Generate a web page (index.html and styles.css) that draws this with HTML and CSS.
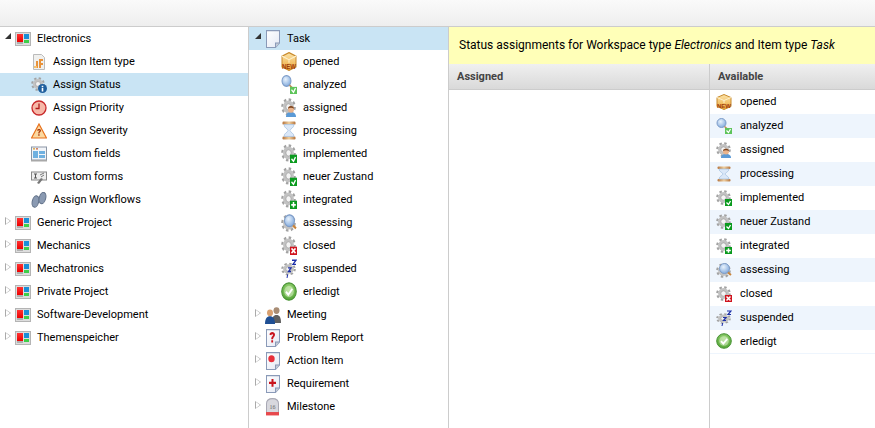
FILE: index.html
```html
<!DOCTYPE html>
<html lang="en">

<head>
    <meta charset="UTF-8">
    <meta name="viewport" content="width=device-width, initial-scale=1.0">
    <title>Workspace types</title>
    <link rel="stylesheet" href="styles.css">
</head>

<body>
    <svg class="defs" xmlns="http://www.w3.org/2000/svg">
        <defs>
            <linearGradient id="red" x1="0" y1="0" x2="0" y2="1"><stop offset="0" stop-color="#f33"/><stop offset="1" stop-color="#e00"/></linearGradient>
            <linearGradient id="sand" x1="0" y1="0" x2="1" y2="0"><stop offset="0" stop-color="#b5743c"/><stop offset=".5" stop-color="#f0d0a0"/><stop offset="1" stop-color="#b5743c"/></linearGradient>
            <linearGradient id="box" x1="0" y1="0" x2="0" y2="1"><stop offset="0" stop-color="#fbe3a8"/><stop offset="1" stop-color="#eda93c"/></linearGradient>
            <radialGradient id="lens" cx=".4" cy=".35" r=".7"><stop offset="0" stop-color="#e8f2fc"/><stop offset="1" stop-color="#7fa8dc"/></radialGradient>
            <radialGradient id="okball" cx=".5" cy=".35" r=".7"><stop offset="0" stop-color="#a5dc80"/><stop offset="1" stop-color="#4a9e2e"/></radialGradient>
            <linearGradient id="paper" x1="0" y1="0" x2="1" y2="1"><stop offset="0" stop-color="#fff"/><stop offset="1" stop-color="#e4e8f4"/></linearGradient>
        </defs>

        <symbol id="ws" viewBox="0 0 16 14" preserveAspectRatio="none">
            <rect x=".5" y=".5" width="15" height="13" fill="#ddd" stroke="#b4b4b4"/>
            <rect x="2" y="2" width="6" height="8" fill="url(#red)"/>
            <rect x="9" y="2" width="5" height="5" fill="#1b8fd8"/>
            <rect x="9" y="8" width="5" height="3" fill="#3ecf4a"/>
            <rect x="2" y="10" width="6" height="2" fill="#b0b0b0"/>
        </symbol>
        <symbol id="gear" viewBox="0 0 16 16" preserveAspectRatio="none">
            <circle cx="8" cy="8" r="6.600" fill="none" stroke="#a2a2a2" stroke-width="2.400" stroke-dasharray="2.600 2.580"/>
            <circle cx="8" cy="8" r="5.800" fill="#c2c2c2"/>
            <circle cx="8" cy="8" r="2.800" fill="#f4f4f4" stroke="#949494" stroke-width=".6"/>
        </symbol>
        <symbol id="page" viewBox="0 0 16 16" preserveAspectRatio="none">
            <path d="M1.500.5h13v11l-4 4h-9z" fill="url(#paper)" stroke="#8a9ab8"/>
            <path d="M10.500 15.500v-4h4" fill="#c4cad6" stroke="#8a9ab8"/>
        </symbol>

        <symbol id="i-itemtype" viewBox="0 0 16 16" preserveAspectRatio="none">
            <path d="M2.500.5h8l3 3v12h-11z" fill="#f0f0ee" stroke="#bbb"/>
            <path d="M5 7h2v7H5zM8 5h4v2H10v2h2v2h-2v3H8z" fill="#e8923a"/>
            <path d="M3 12h3v2H3z" fill="#f4c070"/>
        </symbol>
        <symbol id="i-status" viewBox="0 0 16 16" preserveAspectRatio="none">
            <use href="#gear" width="14" height="14"/>
            <circle cx="11.500" cy="11.500" r="4.500" fill="#1f5f9e"/>
            <path d="M10.700 8.800h1.600v1.400h-1.600zM10.700 11h1.600v3.400h-1.600z" fill="#fff"/>
        </symbol>
        <symbol id="i-priority" viewBox="0 0 16 16" preserveAspectRatio="none">
            <circle cx="8" cy="8" r="7" fill="#f6b8a8" stroke="#c8282a" stroke-width="1.300"/>
            <path d="M8 3.500V8.500H4.500" fill="none" stroke="#b01c1c" stroke-width="1.300"/>
        </symbol>
        <symbol id="i-severity" viewBox="0 0 16 16" preserveAspectRatio="none">
            <path d="M8 1 15.500 15H.5z" fill="#fbd8a0" stroke="#e8701a" stroke-width="1.200"/>
            <path d="M6 7.500C6 5.500 10 5.500 10 7.500 10 9 8.500 9 8.500 10.500H7.200C7.200 8.500 8.600 8.500 8.600 7.600 8.600 7 7.400 7 7.400 7.800zM7.200 11.300h1.400v1.500H7.200z" fill="#a83a10"/>
        </symbol>
        <symbol id="i-fields" viewBox="0 0 16 16" preserveAspectRatio="none">
            <rect x=".5" y="1" width="15" height="13" fill="#f2f4f8" stroke="#8b96a6"/>
            <rect x="2" y="2.200" width="2" height="1.300" fill="#d6a030"/>
            <rect x="5" y="2.200" width="2" height="1.300" fill="#c64"/>
            <rect x="2" y="5" width="5" height="7" fill="#6fb0e0"/>
            <rect x="8" y="5" width="6" height="3" fill="#6fb0e0"/>
            <rect x="8" y="9" width="6" height="3" fill="#6fb0e0"/>
            <rect x="0" y="14" width="16" height="1.500" fill="#a8a8a8"/>
        </symbol>
        <symbol id="i-forms" viewBox="0 0 16 16" preserveAspectRatio="none">
            <rect x=".5" y="3" width="15" height="8" fill="#eee" stroke="#888"/>
            <path d="M3 5h3M4.500 5v4M3 9h3" stroke="#555" fill="none"/>
            <path d="M9 6l4-2M10 8l3-2" stroke="#777" fill="none"/>
            <path d="M6 14l4-5 2 1-4 5z" fill="#777"/>
        </symbol>
        <symbol id="i-workflows" viewBox="0 0 16 16" preserveAspectRatio="none">
            <ellipse cx="4.500" cy="9.500" rx="3.200" ry="5.800" transform="rotate(15 4.500 9.500)" fill="#8a9ab2" stroke="#5f6f87"/>
            <ellipse cx="11.500" cy="6" rx="3.200" ry="5.800" transform="rotate(15 11.500 6)" fill="#8a9ab2" stroke="#5f6f87"/>
        </symbol>

        <symbol id="s-opened" viewBox="0 0 16 16" preserveAspectRatio="none">
            <path d="M8 .5 15 3.500v9L8 15.500 1 12.500v-9z" fill="url(#box)" stroke="#c88a2c"/>
            <path d="M1 3.500 8 6.500l7-3M8 6.500V9" fill="none" stroke="#fdf0cc"/>
        </symbol>
        <symbol id="s-analyzed" viewBox="0 0 16 16" preserveAspectRatio="none">
            <circle cx="5.500" cy="5" r="4.500" fill="url(#lens)" stroke="#7d9cc8"/>
            <path d="M8.500 8.500l3 2.500" stroke="#b98a50" stroke-width="1.500"/>
            <rect x="9" y="10" width="7" height="6" fill="#5ec45a"/>
            <path d="M10.500 12.500l2 2 2-3.500" fill="none" stroke="#fff" stroke-width="1.200"/>
        </symbol>
        <symbol id="s-assigned" viewBox="0 0 16 16" preserveAspectRatio="none">
            <use href="#gear" width="15" height="15"/>
            <path d="M5 16c0-3 2-4 5-4s5 1 5 4z" fill="#5b9ad6"/>
            <circle cx="10" cy="9.500" r="3" fill="#eab48c"/>
            <path d="M7 9c0-3 6-3 6 0-2-1-4-1-6 0z" fill="#7a4420"/>
        </symbol>
        <symbol id="s-processing" viewBox="0 0 16 16" preserveAspectRatio="none">
            <rect x="1.500" y=".5" width="13" height="2.500" rx="1" fill="url(#sand)"/>
            <rect x="1.500" y="13" width="13" height="2.500" rx="1" fill="url(#sand)"/>
            <path d="M3 3h10c0 3-4 3.500-4 5s4 2 4 5H3c0-3 4-3.500 4-5S3 6 3 3z" fill="#dbe8f8" stroke="#9ab8dc" stroke-width=".6"/>
        </symbol>
        <symbol id="s-implemented" viewBox="0 0 16 16" preserveAspectRatio="none">
            <use href="#gear" width="15" height="15"/>
            <rect x="9" y="9" width="7" height="7" fill="#0a9a1e"/>
            <path d="M10.500 12.500l2 2 2-3.500" fill="none" stroke="#fff" stroke-width="1.300"/>
        </symbol>
        <symbol id="s-integrated" viewBox="0 0 16 16" preserveAspectRatio="none">
            <use href="#gear" width="15" height="15"/>
            <rect x="9" y="9" width="7" height="7" fill="#0a9a1e"/>
            <path d="M12.500 10.200v4.600M10.200 12.500h4.600" fill="none" stroke="#fff" stroke-width="1.500"/>
        </symbol>
        <symbol id="s-assessing" viewBox="0 0 16 16" preserveAspectRatio="none">
            <use href="#gear" y="1" width="15" height="15"/>
            <circle cx="8.500" cy="6.500" r="5" fill="url(#lens)" stroke="#7d9cc8"/>
            <path d="M12 10.500l3 2.500" stroke="#c8843c" stroke-width="2"/>
        </symbol>
        <symbol id="s-closed" viewBox="0 0 16 16" preserveAspectRatio="none">
            <use href="#gear" width="15" height="15"/>
            <rect x="9" y="9" width="7" height="7" fill="#d0141e"/>
            <path d="M10.500 10.500l4 4M14.500 10.500l-4 4" fill="none" stroke="#fff" stroke-width="1.500"/>
        </symbol>
        <symbol id="s-suspended" viewBox="0 0 16 16" preserveAspectRatio="none">
            <use href="#gear" y="3" width="15" height="11"/>
            <path d="M11 1h4l-3 3.500h3M7 7.500h3l-2.500 3H10" fill="none" stroke="#1c2fa8" stroke-width="1.200"/>
            <path d="M6 16l.7-3" stroke="#1c2fa8"/>
        </symbol>
        <symbol id="s-erledigt" viewBox="0 0 16 16" preserveAspectRatio="none">
            <circle cx="8" cy="8" r="7.300" fill="url(#okball)" stroke="#4a9436"/>
            <circle cx="8" cy="8" r="4.800" fill="#d8efc8" opacity=".55"/>
            <path d="M5 8.200l2.300 2.400L11.300 5.800" fill="none" stroke="#fff" stroke-width="1.800"/>
        </symbol>

        <symbol id="t-task" viewBox="0 0 16 16" preserveAspectRatio="none"><use href="#page" width="16" height="16"/></symbol>
        <symbol id="t-meeting" viewBox="0 0 16 16" preserveAspectRatio="none">
            <circle cx="11.500" cy="4" r="3" fill="#a88c74"/>
            <path d="M7 15c0-5 1.500-7 4.500-7s4.500 2 4.500 7z" fill="#5f5f5f"/>
            <circle cx="5" cy="6" r="3" fill="#d8a070"/>
            <path d="M0 16c0-5 2-7 5-7s5 2 5 7z" fill="#1f4f94"/>
        </symbol>
        <symbol id="t-problem" viewBox="0 0 16 16" preserveAspectRatio="none">
            <use href="#page" width="16" height="16"/>
            <path d="M4.500 5C4.500 2 10 2 10 5 10 7 8 7 8 9H6.300C6.300 6.500 8 6.500 8 5.200 8 4.300 6.400 4.300 6.400 5.500zM6.300 10h1.800v2H6.300z" fill="#c8141e"/>
        </symbol>
        <symbol id="t-action" viewBox="0 0 16 16" preserveAspectRatio="none">
            <use href="#page" width="16" height="16"/>
            <circle cx="6.500" cy="6" r="3.200" fill="#e8303a"/>
        </symbol>
        <symbol id="t-requirement" viewBox="0 0 16 16" preserveAspectRatio="none">
            <use href="#page" width="16" height="16"/>
            <path d="M7.500 3.500v7M4 7h7" fill="none" stroke="#c8141e" stroke-width="2"/>
        </symbol>
        <symbol id="t-milestone" viewBox="0 0 16 16" preserveAspectRatio="none">
            <path d="M1.500 13V5C1.500 1.500 4 .5 7.500.5S13.500 1.500 13.500 5v8z" fill="#d8d8de" stroke="#a8a8b4"/>
            <rect x="1" y="12.500" width="13" height="3" fill="#e8484c"/>
        </symbol>
    </svg>

    <div id="topbar"></div>

    <div id="panes">
        <div id="workspaces" class="tree">
            <div class="row"><span class="twisty open"></span><svg class="ws-icon"><use href="#ws"/></svg>Electronics</div>
            <div class="row child"><svg class="icon"><use href="#i-itemtype"/></svg>Assign Item type</div>
            <div class="row child selected"><svg class="icon"><use href="#i-status"/></svg>Assign Status</div>
            <div class="row child"><svg class="icon"><use href="#i-priority"/></svg>Assign Priority</div>
            <div class="row child"><svg class="icon"><use href="#i-severity"/></svg>Assign Severity</div>
            <div class="row child"><svg class="icon"><use href="#i-fields"/></svg>Custom fields</div>
            <div class="row child"><svg class="icon"><use href="#i-forms"/></svg>Custom forms</div>
            <div class="row child"><svg class="icon"><use href="#i-workflows"/></svg>Assign Workflows</div>
            <div class="row"><span class="twisty"></span><svg class="ws-icon"><use href="#ws"/></svg>Generic Project</div>
            <div class="row"><span class="twisty"></span><svg class="ws-icon"><use href="#ws"/></svg>Mechanics</div>
            <div class="row"><span class="twisty"></span><svg class="ws-icon"><use href="#ws"/></svg>Mechatronics</div>
            <div class="row"><span class="twisty"></span><svg class="ws-icon"><use href="#ws"/></svg>Private Project</div>
            <div class="row"><span class="twisty"></span><svg class="ws-icon"><use href="#ws"/></svg>Software-Development</div>
            <div class="row"><span class="twisty"></span><svg class="ws-icon"><use href="#ws"/></svg>Themenspeicher</div>
        </div>

        <div id="itemtypes" class="tree">
            <div class="row selected"><span class="twisty open"></span><svg class="type-icon"><use href="#t-task"/></svg>Task</div>
            <div class="row child"><svg class="icon" viewBox="0 0 16 16" preserveAspectRatio="none"><use href="#s-opened" width="16" height="16"/><text x="8" y="14.400" class="new-label">NEW</text></svg>opened</div>
            <div class="row child"><svg class="icon"><use href="#s-analyzed"/></svg>analyzed</div>
            <div class="row child"><svg class="icon"><use href="#s-assigned"/></svg>assigned</div>
            <div class="row child"><svg class="icon"><use href="#s-processing"/></svg>processing</div>
            <div class="row child"><svg class="icon"><use href="#s-implemented"/></svg>implemented</div>
            <div class="row child"><svg class="icon"><use href="#s-implemented"/></svg>neuer Zustand</div>
            <div class="row child"><svg class="icon"><use href="#s-integrated"/></svg>integrated</div>
            <div class="row child"><svg class="icon"><use href="#s-assessing"/></svg>assessing</div>
            <div class="row child"><svg class="icon"><use href="#s-closed"/></svg>closed</div>
            <div class="row child"><svg class="icon"><use href="#s-suspended"/></svg>suspended</div>
            <div class="row child"><svg class="icon"><use href="#s-erledigt"/></svg>erledigt</div>
            <div class="row"><span class="twisty"></span><svg class="type-icon"><use href="#t-meeting"/></svg>Meeting</div>
            <div class="row"><span class="twisty"></span><svg class="type-icon"><use href="#t-problem"/></svg>Problem Report</div>
            <div class="row"><span class="twisty"></span><svg class="type-icon"><use href="#t-action"/></svg>Action Item</div>
            <div class="row"><span class="twisty"></span><svg class="type-icon"><use href="#t-requirement"/></svg>Requirement</div>
            <div class="row"><span class="twisty"></span><svg class="type-icon" viewBox="0 0 16 16" preserveAspectRatio="none"><use href="#t-milestone" width="16" height="16"/><text x="7.500" y="9.500" class="stone-label">16</text></svg>Milestone</div>
        </div>

        <div id="assignments">
            <div id="banner">Status assignments for Workspace type <em>Electronics</em> and Item type <em>Task</em></div>
            <div id="columns">
                <div class="column assigned">
                    <div class="col-header">Assigned</div>
                </div>
                <div class="column available">
                    <div class="col-header">Available</div>
                    <div class="status"><svg class="icon" viewBox="0 0 16 16" preserveAspectRatio="none"><use href="#s-opened" width="16" height="16"/><text x="8" y="14.400" class="new-label">NEW</text></svg>opened</div>
                    <div class="status"><svg class="icon"><use href="#s-analyzed"/></svg>analyzed</div>
                    <div class="status"><svg class="icon"><use href="#s-assigned"/></svg>assigned</div>
                    <div class="status"><svg class="icon"><use href="#s-processing"/></svg>processing</div>
                    <div class="status"><svg class="icon"><use href="#s-implemented"/></svg>implemented</div>
                    <div class="status"><svg class="icon"><use href="#s-implemented"/></svg>neuer Zustand</div>
                    <div class="status"><svg class="icon"><use href="#s-integrated"/></svg>integrated</div>
                    <div class="status"><svg class="icon"><use href="#s-assessing"/></svg>assessing</div>
                    <div class="status"><svg class="icon"><use href="#s-closed"/></svg>closed</div>
                    <div class="status"><svg class="icon"><use href="#s-suspended"/></svg>suspended</div>
                    <div class="status"><svg class="icon"><use href="#s-erledigt"/></svg>erledigt</div>
                </div>
            </div>
        </div>
    </div>
</body>

</html>
```

FILE: styles.css
```css
body {
    margin: 0;
    padding: 0;
    height: 100vh;
    display: flex;
    flex-direction: column;
    overflow: hidden;
    background: #fff;
    color: #000;
    font-family: Roboto, "Liberation Sans", sans-serif;
    font-size: 11px;
}

.defs {
    position: absolute;
    width: 0;
    height: 0;
}

.new-label {
    font-family: "Liberation Sans", Arial, sans-serif;
    font-size: 6px;
    font-weight: bold;
    text-anchor: middle;
    fill: #a03c0c;
}

.stone-label {
    font-family: "Liberation Serif", serif;
    font-size: 6px;
    text-anchor: middle;
    fill: #666;
}

#topbar {
    height: 26px;
    flex: none;
    background: linear-gradient(#fafafa, #eee);
    border-bottom: 1px solid #ccc;
}

#panes {
    flex: 1;
    display: flex;
    min-height: 0;
}

.tree {
    flex: none;
    box-sizing: border-box;
    border-right: 1px solid #ccc;
}

#workspaces {
    width: 249px;
}

#itemtypes {
    width: 200px;
}

.row {
    height: 23px;
    box-sizing: border-box;
    padding-bottom: 1px;
    display: flex;
    align-items: center;
    white-space: nowrap;
}

.row.selected {
    background: #c9e4f4;
}

/* expand arrows */
.twisty {
    width: 0;
    height: 0;
    flex: none;
    margin: -2px 4px 0 5px;
    border-style: solid;
    border-width: 4.5px 0 4.5px 6px;
    border-color: transparent transparent transparent #aaa;
    position: relative;
}

.twisty::after {
    content: "";
    position: absolute;
    left: -5px;
    top: -3px;
    width: 0;
    height: 0;
    border-style: solid;
    border-width: 3px 0 3px 4px;
    border-color: transparent transparent transparent #fff;
}

.twisty.open {
    margin: -4px 4px 0 5px;
    border-width: 0 0 6px 6px;
    border-color: transparent transparent #333 transparent;
}

.twisty.open::after {
    display: none;
}

.ws-icon {
    width: 16px;
    height: 14px;
    flex: none;
    margin: 2px 6px 0 0;
}

.type-icon {
    width: 16px;
    height: 18px;
    flex: none;
    margin: 1px 6px 0 0;
}

.icon {
    width: 16px;
    height: 16px;
    flex: none;
    margin: 1px 6px 0 0;
}

.row.child {
    padding-left: 31px;
}

#itemtypes .row {
    padding-left: 1px;
}

#itemtypes .row.child {
    padding-left: 32px;
}

#itemtypes .icon {
    height: 19px;
}

#assignments {
    flex: 1;
    min-width: 0;
    display: flex;
    flex-direction: column;
}

#banner {
    height: 37px;
    flex: none;
    line-height: 37px;
    padding-left: 10px;
    background: #ffffb8;
    font-size: 12px;
}

#columns {
    flex: 1;
    display: flex;
}

.column.assigned {
    width: 260px;
    flex: none;
}

.column.available {
    flex: 1;
    border-left: 1px solid #ccc;
}

.col-header {
    height: 26px;
    box-sizing: border-box;
    display: flex;
    align-items: center;
    padding: 0 0 1px 8px;
    background: linear-gradient(#f0f0f0, #d9d9d9);
    border-bottom: 1px solid #ccc;
    font-weight: bold;
    color: #444;
}

.status {
    height: 24px;
    box-sizing: border-box;
    padding: 0 0 1px 6px;
    display: flex;
    align-items: center;
}

.status .icon {
    margin: 0 8px 0 0;
}

.status:first-of-type {
    height: 22px;
}

.status:nth-child(odd) {
    background: #eef5fd;
}

.status:last-child {
    border-bottom: 1px solid #eef5fd;
}
```
